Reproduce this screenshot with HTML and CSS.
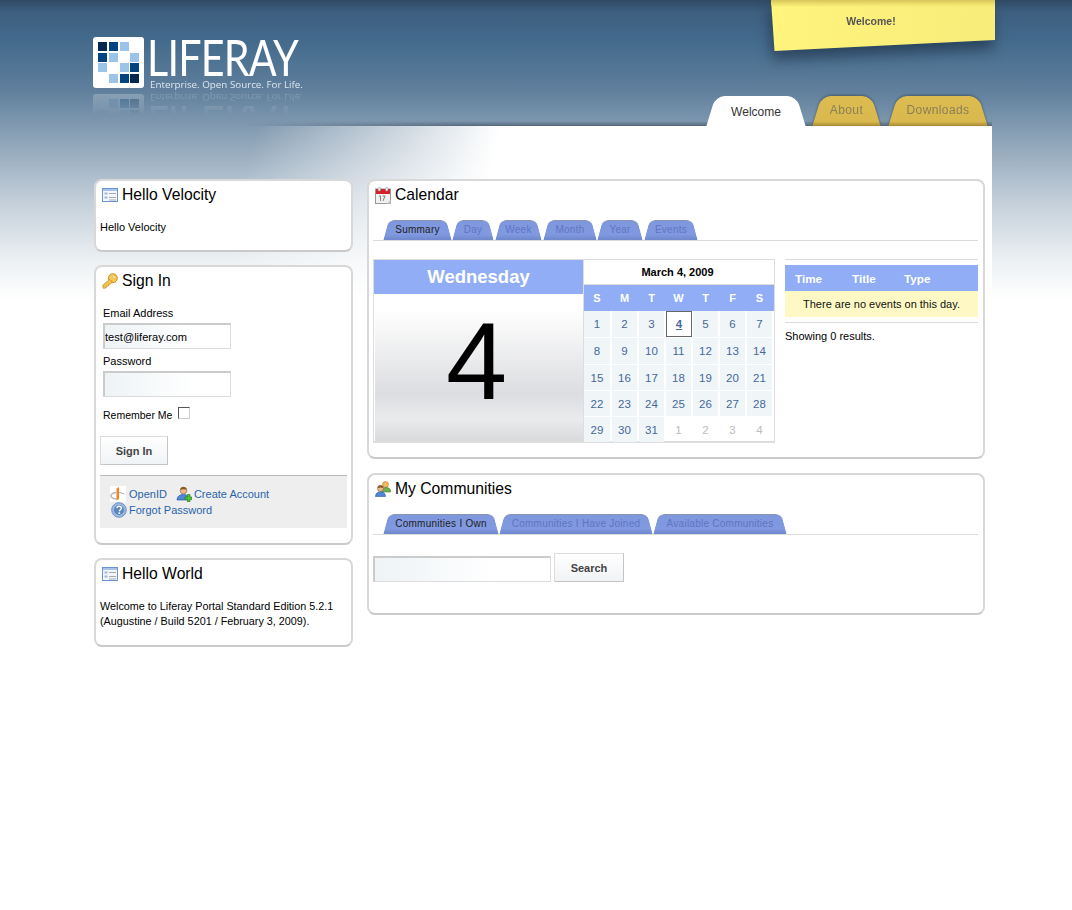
FILE: index.html
```html
<!DOCTYPE html>
<html>
<head>
    <title>Welcome - Liferay</title>
    <meta name="viewport" content="width=device-width, initial-scale=1.0">
    <link rel="stylesheet" href="styles.css">
</head>
<body>
    <svg class="defs" width="0" height="0">
        <symbol id="icon-portlet" viewBox="0 0 16 14">
            <rect x=".5" y=".5" width="15" height="13" fill="#f4f6fb" stroke="#6b93d2"/>
            <rect x="1" y="1" width="14" height="2" fill="#a9c2ea"/>
            <rect x="2.500" y="4.500" width="3" height="2" fill="#9db8e2"/>
            <rect x="2.500" y="8.500" width="3" height="2" fill="#9db8e2"/>
            <path d="M7 5.500h7M7 9.500h7M7 12h7" stroke="#a8a8a8" fill="none"/>
        </symbol>
    </svg>

    <div class="wrapper">
        <header class="banner">
            <a class="logo" href="#">
                <svg class="logo-mark" width="51" height="51" viewBox="0 0 51 51">
                    <rect width="51" height="51" rx="3" fill="#fff"/>
                    <rect x="5" y="5" width="9" height="9" fill="#06274f"/>
                    <rect x="16" y="5" width="9" height="9" fill="#034480"/>
                    <rect x="27" y="5" width="9" height="9" fill="#9cc3e8"/>
                    <rect x="5" y="16" width="9" height="9" fill="#034480"/>
                    <rect x="16" y="16" width="9" height="9" fill="#9cc3e8"/>
                    <rect x="37" y="16" width="9" height="9" fill="#9cc3e8"/>
                    <rect x="5" y="26" width="9" height="9" fill="#9cc3e8"/>
                    <rect x="27" y="26" width="9" height="9" fill="#9cc3e8"/>
                    <rect x="37" y="26" width="9" height="9" fill="#034480"/>
                    <rect x="16" y="37" width="9" height="9" fill="#9cc3e8"/>
                    <rect x="27" y="37" width="9" height="9" fill="#034480"/>
                    <rect x="37" y="37" width="9" height="9" fill="#06274f"/>
                </svg>
                <span class="logo-words">
                    <span class="logo-name">LIFERAY</span>
                    <span class="logo-tag">Enterprise. Open Source. For Life.</span>
                </span>
            </a>
            <div class="sticky-note">
                <div class="sticky-paper">Welcome!</div>
            </div>
            <nav class="nav">
                <a class="nav-tab nav-welcome active" href="#"><span>Welcome</span></a>
                <a class="nav-tab nav-about" href="#"><span>About</span></a>
                <a class="nav-tab nav-downloads" href="#"><span>Downloads</span></a>
            </nav>
        </header>

        <main class="content">
            <div class="col-left">
                <section class="portlet portlet-velocity">
                    <h2 class="portlet-title">
                        <svg class="title-icon" width="16" height="14"><use href="#icon-portlet"/></svg>
                        Hello Velocity
                    </h2>
                    <p class="portlet-text">Hello Velocity</p>
                </section>

                <section class="portlet portlet-signin">
                    <h2 class="portlet-title">
                        <svg class="title-icon" width="16" height="16" viewBox="0 0 16 16">
                            <circle cx="10.800" cy="5.200" r="4.500" fill="#f6cb5a" stroke="#c48f22"/>
                            <circle cx="12" cy="4" r="1.300" fill="#fff6d0" stroke="#d9a93a" stroke-width=".5"/>
                            <path d="M7.500 6.500.7 12.300l.6 3 2.700-.4.800-1.800 1.700-.2.600-1.700 1.700-.4 1.600-2.200z" fill="#f3c34c" stroke="#c48f22" stroke-width=".8"/>
                        </svg>
                        Sign In
                    </h2>
                    <form class="signin-form">
                        <label class="field-label" for="login">Email Address</label>
                        <input class="field" id="login" type="text" value="test@liferay.com">
                        <label class="field-label field-label-pass" for="password">Password</label>
                        <input class="field" id="password" type="password">
                        <div class="remember">
                            <label for="remember">Remember Me</label>
                            <span class="check" id="remember"></span>
                        </div>
                        <button class="btn btn-signin" type="button">Sign In</button>
                    </form>
                    <div class="signin-links">
                        <div class="links-row">
                            <a href="#">
                                <svg class="openid" width="16" height="16" viewBox="0 0 16 16">
                                    <rect width="16" height="16" fill="#fff"/>
                                    <path d="M6 6.500C3 7 1 8.500 1 10c0 1.500 2.500 2.800 5.500 3" fill="none" stroke="#b5b5b5" stroke-width="1.400"/>
                                    <path d="M9 6.500c2 .1 3.500.6 5 1.500" fill="none" stroke="#b5b5b5" stroke-width="1.200"/>
                                    <path d="M6.500 2.500 9 1v12l-2.500 1.500z" fill="#f58220"/>
                                </svg>
                                OpenID
                            </a>
                            <a class="link-create" href="#">
                                <svg width="16" height="16" viewBox="0 0 16 16">
                                    <circle cx="7.500" cy="4.500" r="3.300" fill="#e9b98c" stroke="#9a6a3c" stroke-width=".7"/>
                                    <path d="M4.200 3.800C4.500 1.500 6 1 7.500 1s3 .7 3.300 2.800C9 3 6 3 4.200 3.800z" fill="#8a5a2e"/>
                                    <path d="M1 14c0-3.500 2.500-5.500 6.500-5.500S12 10 12 14z" fill="#4f86d6" stroke="#2d5ea8" stroke-width=".7"/>
                                    <path d="M11.500 8.500v2.500H9v2.500h2.500V16H14v-2.500h2V11h-2V8.500z" fill="#4fc13a" stroke="#1d7a14" stroke-width=".6"/>
                                </svg>
                                Create Account
                            </a>
                        </div>
                        <div class="links-row">
                            <a href="#">
                                <svg class="forgot" width="16" height="16" viewBox="0 0 16 16">
                                    <circle cx="8" cy="8" r="7.300" fill="#9dbbe0" stroke="#6f93c4"/>
                                    <circle cx="8" cy="8" r="5" fill="#5b86c0"/>
                                    <path d="M5.800 6.200C6 4.800 7 4.300 8 4.300c1.300 0 2.300.8 2.300 2 0 1.500-2 1.600-2 3" fill="none" stroke="#fff" stroke-width="1.400"/>
                                    <rect x="7.400" y="10.300" width="1.700" height="1.700" fill="#fff"/>
                                </svg>
                                Forgot Password
                            </a>
                        </div>
                    </div>
                </section>

                <section class="portlet portlet-world">
                    <h2 class="portlet-title">
                        <svg class="title-icon" width="16" height="14"><use href="#icon-portlet"/></svg>
                        Hello World
                    </h2>
                    <p class="portlet-text">Welcome to Liferay Portal Standard Edition 5.2.1<br>(Augustine / Build 5201 / February 3, 2009).</p>
                </section>
            </div>

            <div class="col-right">
                <section class="portlet portlet-calendar">
                    <h2 class="portlet-title">
                        <svg class="title-icon" width="16" height="17" viewBox="0 0 16 17">
                            <rect x=".5" y="2" width="15" height="14.500" fill="#f1f1f1" stroke="#999"/>
                            <rect x="1" y="2" width="14" height="5" fill="#d2232a"/>
                            <rect x="3" y=".5" width="2.500" height="3.500" rx="1" fill="#eee" stroke="#888" stroke-width=".5"/>
                            <rect x="10.500" y=".5" width="2.500" height="3.500" rx="1" fill="#eee" stroke="#888" stroke-width=".5"/>
                            <path d="M4 9h1.500v5M7.500 9H10l-2 5" fill="none" stroke="#777" stroke-width=".9"/>
                            <path d="M11.500 16.500 15.500 12.500v4z" fill="#cfcfcf"/>
                        </svg>
                        Calendar
                    </h2>
                    <div class="tabs">
                        <a class="tab tab-summary active" href="#"><span>Summary</span></a>
                        <a class="tab tab-day" href="#"><span>Day</span></a>
                        <a class="tab tab-week" href="#"><span>Week</span></a>
                        <a class="tab tab-month" href="#"><span>Month</span></a>
                        <a class="tab tab-year" href="#"><span>Year</span></a>
                        <a class="tab tab-events" href="#"><span>Events</span></a>
                    </div>
                    <div class="cal-body">
                        <div class="day-box">
                            <div class="day-name">Wednesday</div>
                            <div class="day-num">4</div>
                        </div>
                        <div class="mini-cal">
                            <div class="mini-title">March 4, 2009</div>
                            <div class="mini-head">
                                <span>S</span><span>M</span><span>T</span><span>W</span><span>T</span><span>F</span><span>S</span>
                            </div>
                            <div class="mini-days">
                                <a href="#">1</a><a href="#">2</a><a href="#">3</a><a class="today" href="#">4</a><a href="#">5</a><a href="#">6</a><a href="#">7</a>
                                <a href="#">8</a><a href="#">9</a><a href="#">10</a><a href="#">11</a><a href="#">12</a><a href="#">13</a><a href="#">14</a>
                                <a href="#">15</a><a href="#">16</a><a href="#">17</a><a href="#">18</a><a href="#">19</a><a href="#">20</a><a href="#">21</a>
                                <a href="#">22</a><a href="#">23</a><a href="#">24</a><a href="#">25</a><a href="#">26</a><a href="#">27</a><a href="#">28</a>
                                <a href="#">29</a><a href="#">30</a><a href="#">31</a>
                                <span class="other">1</span><span class="other">2</span><span class="other">3</span><span class="other">4</span>
                            </div>
                        </div>
                        <div class="events">
                            <table class="events-table">
                                <thead>
                                    <tr><th class="th-time">Time</th><th class="th-title">Title</th><th>Type</th></tr>
                                </thead>
                                <tbody>
                                    <tr><td colspan="3">There are no events on this day.</td></tr>
                                </tbody>
                            </table>
                            <p class="events-count">Showing 0 results.</p>
                        </div>
                    </div>
                </section>

                <section class="portlet portlet-communities">
                    <h2 class="portlet-title">
                        <svg class="title-icon" width="16" height="16" viewBox="0 0 16 16">
                            <circle cx="10.500" cy="3.500" r="3" fill="#f0b860" stroke="#b57a24" stroke-width=".6"/>
                            <path d="M7 11c0-3 1.500-4.500 4-4.500s4.500 1 4.500 3.500v1z" fill="#6fb04e" stroke="#3f7f2c" stroke-width=".6"/>
                            <circle cx="5.500" cy="7.500" r="3" fill="#e9b98c" stroke="#8a5a2e" stroke-width=".6"/>
                            <path d="M2.500 7c.3-2 1.600-2.500 3-2.500s2.700.6 3 2.500c-2-.8-4-.8-6 0z" fill="#8a4f24"/>
                            <path d="M.5 15.500c0-3 2-4.700 5-4.700s5 1.700 5 4.700z" fill="#4f86d6" stroke="#2d5ea8" stroke-width=".6"/>
                        </svg>
                        My Communities
                    </h2>
                    <div class="tabs">
                        <a class="tab tab-own active" href="#"><span>Communities I Own</span></a>
                        <a class="tab tab-joined" href="#"><span>Communities I Have Joined</span></a>
                        <a class="tab tab-available" href="#"><span>Available Communities</span></a>
                    </div>
                    <form class="search-row">
                        <input class="field field-search" type="text">
                        <button class="btn btn-search" type="button">Search</button>
                    </form>
                </section>
            </div>
        </main>
    </div>
</body>
</html>
```

FILE: styles.css
```css
body {
    margin: 0;
    padding: 0;
    height: 910px;
    overflow: hidden;
    font-family: "Liberation Sans", Arial, sans-serif;
    font-size: 11px;
    color: #000;
    background-color: #fff;
    background-image: linear-gradient(to bottom, #2f4a64 0, #3e5f80 12px, #436a8c 40px, #5f7f9c 90px, #8ea4b8 140px, #c2ced9 200px, #ecf0f3 260px, #fff 300px);
    background-repeat: no-repeat;
    background-size: 100% 300px;
}
a {
    color: #2a64a8;
    text-decoration: none;
}
.defs {
    position: absolute;
}
.wrapper {
    width: 899px;
    margin-left: 93px;
}

/* banner */
.banner {
    position: relative;
    height: 126px;
}
.logo {
    position: absolute;
    left: 0;
    top: 37px;
    display: flex;
    gap: 6px;
    color: #fff;
    -webkit-box-reflect: below 0 linear-gradient(transparent 55%, rgba(255, 255, 255, .28));
}
.logo-mark {
    display: block;
    margin-bottom: 2px;
}
.logo-words {
    display: flex;
    flex-direction: column;
    width: 154px;
}
.logo-name {
    font-family: Lato, sans-serif;
    font-size: 51px;
    line-height: 40px;
    height: 40px;
    letter-spacing: -1px;
    margin-left: -3px;
    transform: scaleX(.81);
    transform-origin: left center;
}
.logo-tag {
    font-family: "Open Sans", sans-serif;
    font-size: 9.800px;
    line-height: 13px;
    margin-top: 1px;
    color: #dfe7ee;
    white-space: nowrap;
}
.sticky-note {
    position: absolute;
    left: 678px;
    top: 0;
    filter: drop-shadow(-2px 9px 7px rgba(20, 35, 55, .55));
}
.sticky-paper {
    box-sizing: border-box;
    width: 224px;
    height: 51px;
    padding: 15px 24px 0 0;
    line-height: 13px;
    text-align: center;
    font-weight: bold;
    font-size: 10.500px;
    color: #555;
    background: linear-gradient(to bottom, #d6c55a 0, #efe06c 4px, rgba(255, 255, 255, 0) 7px), linear-gradient(100deg, #fff47c, #f8ec7a);
    clip-path: polygon(0 0, 100% 0, 100% 40px, 3.500px 100%);
}
.nav {
    position: absolute;
    left: 150px;
    right: 0;
    bottom: 0;
    height: 30px;
}
.nav::after {
    content: "";
    position: absolute;
    left: 0;
    right: 0;
    bottom: 0;
    height: 5px;
    background: linear-gradient(to bottom, rgba(40, 55, 70, 0), rgba(40, 55, 70, .5));
    -webkit-mask-image: linear-gradient(to right, transparent, #000 30%);
    mask-image: linear-gradient(to right, transparent, #000 30%);
}
.nav-tab {
    position: absolute;
    z-index: 1;
    top: 0;
    bottom: 0;
    font-size: 12px;
    color: #8a8058;
    filter: drop-shadow(0 -1px 1px rgba(50, 60, 70, .6));
}
.nav-tab::before,
.nav-tab::after,
.tab::before,
.tab::after {
    content: "";
    position: absolute;
    top: 0;
    bottom: 0;
    width: 60%;
}
.nav-tab::before {
    left: 4px;
    transform: skewX(-17deg);
    border-radius: 9px 0 0 0;
}
.nav-tab::after {
    right: 4px;
    transform: skewX(17deg);
    border-radius: 0 9px 0 0;
}
.nav-tab::before,
.nav-tab::after {
    background: linear-gradient(to bottom, #dcbc50 0, #d9b94e 85%, #a98a32 100%);
}
.nav-tab span {
    position: absolute;
    z-index: 1;
    left: 0;
    right: 0;
    top: 7px;
    text-align: center;
    letter-spacing: .4px;
}
.nav-tab.active {
    color: #333;
    filter: none;
}
.nav-tab.active::before,
.nav-tab.active::after {
    background: #fff;
}
.nav-tab.active span {
    top: 9px;
    letter-spacing: 0;
}
.nav-welcome {
    left: 464px;
    width: 98px;
}
.nav-about {
    left: 570px;
    width: 67px;
}
.nav-downloads {
    left: 646px;
    width: 98px;
}

/* columns */
.content {
    position: relative;
    display: grid;
    grid-template-columns: 259px 618px;
    column-gap: 14px;
    align-items: start;
    box-sizing: border-box;
    height: 784px;
    padding: 53px 7px 0 1px;
    background: linear-gradient(103deg, rgba(255, 255, 255, 0) 160px, #fff 397px);
}
.col-left,
.col-right {
    display: flex;
    flex-direction: column;
    gap: 14px;
}
.col-left {
    gap: 13px;
}
.portlet {
    position: relative;
    box-sizing: border-box;
    background: #fff;
    border: 2px solid #d8d8d8;
    border-bottom-color: #cacaca;
    border-radius: 8px;
}
.portlet-velocity {
    height: 73px;
}
.portlet-signin {
    height: 280px;
}
.portlet-world {
    height: 89px;
}
.portlet-calendar {
    height: 280px;
}
.portlet-communities {
    height: 142px;
}
.portlet-title {
    display: flex;
    align-items: center;
    height: 26px;
    margin: 0;
    padding: 1px 0 0 6px;
    font-size: 15.700px;
    font-weight: normal;
    line-height: 26px;
}
.title-icon {
    flex: none;
    margin-right: 4px;
}
.portlet-text {
    margin: 0;
    padding: 11px 4px 0;
    line-height: 16px;
}
.portlet-world .portlet-text {
    padding-top: 12px;
    font-size: 10.800px;
    line-height: 15px;
}

/* sign in */
.signin-form {
    padding: 12px 0 0 4px;
}
.field-label {
    display: block;
    margin-left: 3px;
    height: 14px;
    line-height: 14px;
}
.field-label-pass {
    margin-top: 5px;
}
.field {
    display: block;
    box-sizing: border-box;
    margin: 3px 0 0 3px;
    width: 128px;
    height: 26px;
    padding: 0;
    font-family: "Liberation Sans", Arial, sans-serif;
    font-size: 11.100px;
    color: #000;
    border: 1px solid #dcdcdc;
    border-top: 2px solid #cbcbcb;
    border-left: 2px solid #cbcbcb;
    border-radius: 0;
    background: linear-gradient(to right, #eef3f6, #fff 70%);
}
.remember {
    display: flex;
    align-items: flex-start;
    height: 30px;
    margin: 9px 0 0 3px;
    font-size: 10.500px;
    line-height: 18px;
}
.check {
    box-sizing: border-box;
    width: 12px;
    height: 12px;
    margin: 1px 0 0 6px;
    border: 1px solid #555;
    border-right-color: #ccc;
    border-bottom-color: #ccc;
    background: #fff;
}
.btn {
    display: block;
    box-sizing: border-box;
    height: 29px;
    padding: 0;
    font-family: "Liberation Sans", Arial, sans-serif;
    font-size: 11px;
    font-weight: bold;
    color: #444;
    background: linear-gradient(to bottom, #fff, #f0f3f5);
    border: 1px solid #c4c4c4;
    border-top-color: #ddd;
    border-left-color: #ddd;
    border-radius: 0;
}
.btn-signin {
    width: 68px;
}
.signin-links {
    box-sizing: border-box;
    height: 53px;
    margin: 10px 4px 0;
    padding: 10px 0 0 10px;
    background: #eee;
    border-top: 1px solid #bbb;
}
.links-row {
    display: flex;
    gap: 12px;
    height: 16px;
}
.signin-links a {
    display: flex;
    align-items: center;
    gap: 3px;
    color: #2a64a8;
    line-height: 16px;
}
.signin-links .link-create {
    gap: 2px;
    margin-left: -3px;
}
.forgot {
    margin-left: 1px;
    margin-right: -1px;
}

/* tabs */
.tabs {
    position: relative;
    height: 20px;
    margin: 12px 5px 0 4px;
    border-bottom: 1px solid #dcdcdc;
}
.tab {
    position: absolute;
    top: 0;
    height: 20px;
    font-size: 10px;
    color: #5f75c4;
}
.tab::before {
    left: 3px;
    transform: skewX(-15deg);
    border-radius: 6px 0 0 0;
}
.tab::after {
    right: 3px;
    transform: skewX(15deg);
    border-radius: 0 6px 0 0;
}
.tab::before,
.tab::after {
    background: linear-gradient(to bottom, #7f97dd 0, #8099e0 70%, #6f87cc 100%);
    border-top: 1px solid #8a94b0;
    box-sizing: border-box;
}
.tab span {
    position: absolute;
    z-index: 1;
    left: 0;
    right: 0;
    top: 3px;
    line-height: 14px;
    text-align: center;
    letter-spacing: .25px;
    white-space: nowrap;
}
.tab.active {
    color: #222;
}
.tab-summary { left: 10px; width: 69px; }
.tab-day { left: 79px; width: 42px; }
.tab-week { left: 122px; width: 47px; }
.tab-month { left: 170px; width: 54px; }
.tab-year { left: 224px; width: 46px; }
.tab-events { left: 271px; width: 54px; }
.tab-own { left: 10px; width: 116px; }
.tab-joined { left: 126px; width: 154px; }
.tab-available { left: 280px; width: 134px; }

/* calendar */
.cal-body {
    display: flex;
    align-items: flex-start;
    margin: 18px 5px 0 4px;
}
.day-box {
    box-sizing: border-box;
    width: 210px;
    height: 184px;
    border: 1px solid #ddd;
    border-bottom-width: 2px;
    border-right: 0;
}
.day-name {
    height: 34px;
    font-size: 18.500px;
    font-weight: bold;
    line-height: 34px;
    text-align: center;
    color: #fff;
    background: #90adf5;
}
.day-num {
    box-sizing: border-box;
    height: 147px;
    margin: 0 0 0 1px;
    padding-right: 5px;
    font-size: 110px;
    line-height: 133px;
    text-align: center;
    background: linear-gradient(to bottom, #fff 0, #fff 15px, #dcdde0 68%, #eaebed 85%, #d9dadc 100%);
}
.mini-cal {
    box-sizing: border-box;
    width: 192px;
    height: 184px;
    border: 1px solid #ddd;
    border-bottom-width: 2px;
    background: #fff;
}
.mini-title {
    height: 25px;
    padding-right: 3px;
    font-weight: bold;
    font-size: 11px;
    line-height: 25px;
    text-align: center;
    border-bottom: 1px solid #ddd;
    box-sizing: border-box;
}
.mini-head {
    display: grid;
    grid-template-columns: 26px repeat(6, 25px);
    column-gap: 2px;
    height: 26px;
    font-weight: bold;
    font-size: 11px;
    line-height: 26px;
    text-align: center;
    color: #fff;
    background: #90adf5;
}
.mini-days {
    display: grid;
    grid-template-columns: 26px repeat(6, 25px);
    grid-template-rows: 26px 26px 25px 25px 25px;
    column-gap: 2px;
    row-gap: 1px;
    font-size: 11.500px;
}
.mini-days a,
.mini-days span {
    display: flex;
    align-items: center;
    justify-content: center;
}
.mini-days a {
    color: #46689c;
    background: #f0f5f8;
}
.mini-days a.today {
    box-sizing: border-box;
    font-weight: bold;
    text-decoration: underline;
    background: #fff;
    border: 1px solid #666;
    margin-right: -1px;
}
.mini-days .other {
    color: #bbb;
}
.events {
    width: 193px;
    margin-left: 10px;
}
.events-table {
    width: 100%;
    padding: 5px 0;
    border-top: 1px solid #dcdcdc;
    border-bottom: 1px solid #dcdcdc;
    border-collapse: separate;
    border-spacing: 0;
}
.events-table th {
    height: 26px;
    padding: 0;
    font-size: 11.700px;
    text-align: left;
    color: #fff;
    background: #90adf5;
}
.events-table .th-time {
    width: 57px;
    padding-left: 10px;
}
.th-title {
    width: 52px;
}
.events-table td {
    height: 26px;
    padding: 0;
    text-align: center;
    color: #111;
    font-size: 11px;
    background: #fef9c4;
}
.events-count {
    margin: 6px 0 0;
    line-height: 14px;
    font-size: 11px;
}

/* communities */
.search-row {
    display: flex;
    align-items: flex-end;
    gap: 3px;
    margin: 18px 0 0 4px;
}
.field-search {
    width: 178px;
    margin: 0;
}
.btn-search {
    width: 70px;
}
```
